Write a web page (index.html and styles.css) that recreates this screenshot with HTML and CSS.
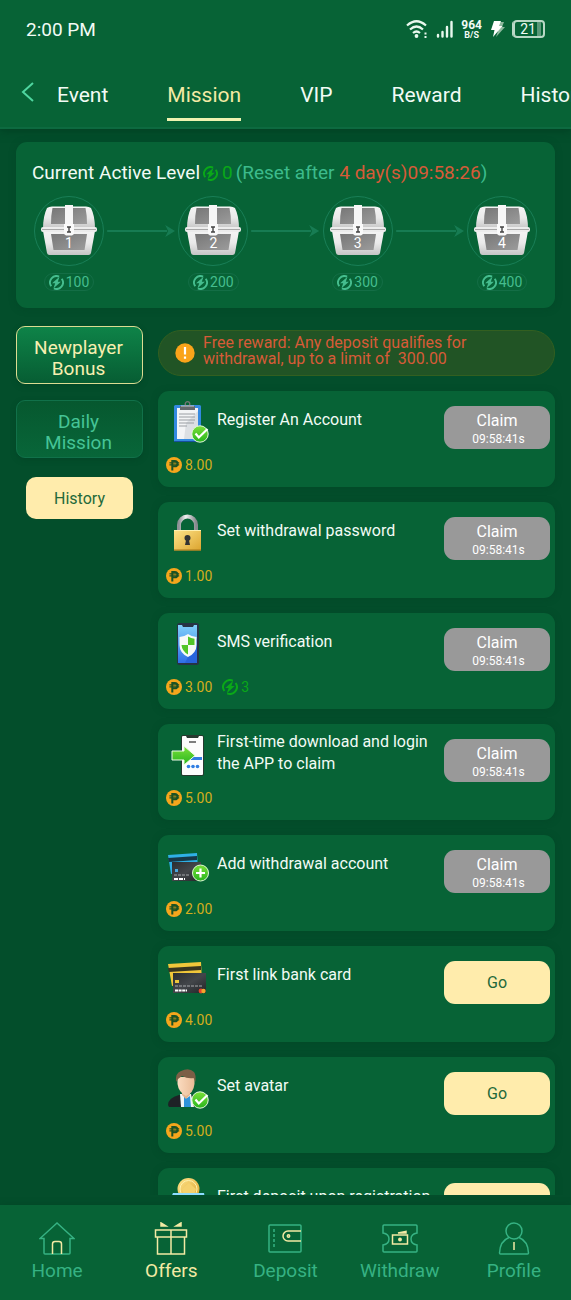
FILE: index.html
```html
<!DOCTYPE html>
<html lang="en">
<head>
<meta charset="utf-8">
<meta name="viewport" content="width=device-width, initial-scale=1">
<title>Mission</title>
<link rel="stylesheet" href="styles.css">
</head>
<body>
<svg class="defs" aria-hidden="true">
  <defs>
    <linearGradient id="metal" x1="0" x2="0" y1="0" y2="1"><stop offset="0" stop-color="#f4f4f4"/><stop offset=".5" stop-color="#eaeaea"/><stop offset="1" stop-color="#c4c4c4"/></linearGradient>
    <linearGradient id="panel" x1="0" x2="1" y1="0" y2="1"><stop offset="0" stop-color="#777"/><stop offset="1" stop-color="#9c9c9c"/></linearGradient>
    <linearGradient id="gold" x1="0" x2="1" y1="0" y2="1"><stop offset="0" stop-color="#ffe48a"/><stop offset="1" stop-color="#dca42e"/></linearGradient>
    <linearGradient id="steel" x1="0" x2="1"><stop offset="0" stop-color="#8e9296"/><stop offset=".4" stop-color="#f1f1f1"/><stop offset="1" stop-color="#85898d"/></linearGradient>
    <linearGradient id="green" x1="0" x2="0" y1="0" y2="1"><stop offset="0" stop-color="#7be03a"/><stop offset="1" stop-color="#27b51c"/></linearGradient>
    <linearGradient id="screen" x1="0" x2="0" y1="0" y2="1"><stop offset="0" stop-color="#7fd0fa"/><stop offset="1" stop-color="#2f6fe8"/></linearGradient>
    <linearGradient id="skin" x1="0" x2="1"><stop offset="0" stop-color="#fbdcc0"/><stop offset="1" stop-color="#eabb96"/></linearGradient>
    <linearGradient id="dark" x1="0" x2="1" y1="0" y2="1"><stop offset="0" stop-color="#2b2d30"/><stop offset=".5" stop-color="#43464a"/><stop offset="1" stop-color="#222427"/></linearGradient>
  </defs>
  <symbol id="bolt" viewBox="0 0 16 16">
    <path d="M10.800 1.700A6.900 6.900 0 0 0 2.400 12M5.200 14.300A6.900 6.900 0 0 0 13.600 4" fill="none" stroke="currentColor" stroke-width="2"/>
    <path d="M11.200 1.800 3.300 8.900h3.300l-1.800 5.300 7.900-7.100H9.400z" fill="currentColor"/>
  </symbol>
  <symbol id="chest" viewBox="0 0 56 52">
    <path d="M6 3Q8 1.500 11 1.500h34q3 0 5 1.500 4 8 4 21H2Q2 11 6 3z" fill="url(#metal)"/>
    <path d="M11.500 3Q10 10 10 19h14V3zM32 3v16h14q0-9-1.500-16z" fill="url(#panel)"/>
    <path d="M2 26h52l-4 22q-.5 2-2.500 2h-39Q6.500 50 6 48z" fill="url(#metal)"/>
    <path d="M10 29h36l-2.500 16h-31z" fill="url(#panel)"/>
    <path d="M24 0h8v21h-8z" fill="#f6f6f6"/>
    <rect y="22" width="56" height="5" rx="2" fill="#ececec"/><path d="M1 24.500h54" stroke="#a8a8a8"/>
    <path d="M23 19h10v10l-2 1.500h-6L23 29z" fill="#fafafa"/>
    <path d="M26 22h4M28 22v5M26 27h4" stroke="#444" stroke-width="1.400"/>
  </symbol>
  <symbol id="peso" viewBox="0 0 16 16">
    <circle cx="8" cy="8" r="8" fill="#f5a61c"/>
    <path d="M6.300 13.500V4h2.500a2.600 2.600 0 0 1 0 5.300H6.300" fill="none" stroke="#1b5225" stroke-width="2"/>
    <path d="M3.400 5.800h9.800M3.400 7.900h9.800" stroke="#1b5225" stroke-width="1.200"/>
  </symbol>
  <symbol id="check" viewBox="0 0 18 18">
    <circle cx="9" cy="9" r="8.200" fill="url(#green)" stroke="#e4f8dc" stroke-width="1"/>
    <path d="m4.500 8.500 3.300 4L16.500 4" fill="none" stroke="#fff" stroke-width="2.200"/>
  </symbol>
  <symbol id="clipboard" viewBox="0 0 42 42">
    <rect x="6" y="4" width="27" height="37" rx="1.500" fill="#3389e0"/><path d="M6 40h27v1H6z" fill="#174f9c"/>
    <path d="M9 7h21v31H9z" fill="#f3f4f6"/><path d="m18 22 12-12v28H16z" fill="#dcdfe3"/>
    <path d="M11 13h16M11 16h16M11 19h16M11 22h15M11 25h8" stroke="#9a9ea3"/>
    <circle cx="19.500" cy="3" r="2.300" fill="none" stroke="#777" stroke-width="1.300"/>
    <path d="M12 5h15v4H12z" fill="#65696d"/><path d="M13 5h13" stroke="#c6c9cc"/>
    <use href="#check" x="23" y="24" width="18" height="18"/>
  </symbol>
  <symbol id="padlock" viewBox="0 0 42 42">
    <path d="M11 20v-7a8.500 8.500 0 0 1 17 0v7" fill="none" stroke="url(#steel)" stroke-width="4"/>
    <path d="M6 18h27v20.500H6z" fill="url(#gold)"/><path d="M6 18.500h27" stroke="#fff0ae"/><path d="M6 38h27" stroke="#a87618"/>
    <circle cx="19.500" cy="26" r="3" fill="#333"/><path d="m18.500 26-1.500 7h5l-1.500-7z" fill="#333"/>
  </symbol>
  <symbol id="phone-shield" viewBox="0 0 42 42">
    <rect x="9" width="22" height="42" rx="2.500" fill="#263445"/>
    <path d="M10 2h4l1 2h10l1-2h3v38H10z" fill="url(#screen)"/><path d="M29 15v25H17z" fill="#2864dc"/>
    <path d="M20 11q4 3 8.500 3v8q0 8-8.500 12-8.500-4-8.500-12v-8q4.500 0 8.500-3z" fill="#f7faf7"/>
    <path d="M20 13.500q3 2 6.500 2.300V22H20zM13.500 22H20v9.500Q14 28 13.500 22z" fill="#52c529"/>
  </symbol>
  <symbol id="phone-login" viewBox="0 0 42 42">
    <rect x="13" y="1" width="23" height="41" rx="2.500" fill="#27382f"/>
    <path d="M14 3q0-1 1-1h3l1 2h11l1-2h3q1 0 1 1v37q0 1-1 1H15q-1 0-1-1z" fill="#fcfcfc"/>
    <path d="M21 8h7" stroke="#555" stroke-width="1.500"/><path d="M23 23h11v3H21z" fill="#2f7de2"/>
    <circle cx="20.500" cy="32.500" r="1.800" fill="#2f7de2"/><circle cx="25" cy="32.500" r="1.800" fill="#2f7de2"/><circle cx="29.500" cy="32.500" r="1.800" fill="#2f7de2"/>
    <path d="M4 17h12v-5l11 9.500L16 31v-5H4z" fill="url(#green)" stroke="#effce8"/>
  </symbol>
  <symbol id="cards-blue" viewBox="0 0 42 42">
    <path d="m0 10 29-2 1 17-27 4z" fill="#2fb0e6"/><path d="m0 13 29-2v4L1 17z" fill="#173747"/>
    <path d="M4 17h29v19H4z" fill="url(#dark)"/><path d="M7 24h3v3H7z" fill="#4aa7dc"/>
    <path d="M6 30h15" stroke="#a4a7aa" stroke-dasharray="3 1"/><path d="M6 34h11" stroke="#fff" stroke-width="1.800" stroke-dasharray="4 1"/>
    <circle cx="32.500" cy="28" r="8" fill="url(#green)" stroke="#dff8d6"/><path d="M28 28h9M32.500 23.500v9" stroke="#fff" stroke-width="2.200"/>
  </symbol>
  <symbol id="cards-gold" viewBox="0 0 42 42">
    <path d="m0 8 33-2 1 20-30 4z" fill="#f0c63a"/><path d="m0 12 33-2v4L1 16z" fill="#38341f"/>
    <path d="M5 17h33v20H5z" fill="url(#dark)"/><path d="M7 24h4v3H7z" fill="#ebc63a"/>
    <path d="M7 30h28" stroke="#a8aaad" stroke-dasharray="3 1"/><path d="M7 34.500h12" stroke="#fff" stroke-width="2" stroke-dasharray="3 .6"/>
    <circle cx="33" cy="35" r="2.400" fill="#e5442e"/><circle cx="35.500" cy="35" r="2.200" fill="#f2a62b"/>
  </symbol>
  <symbol id="avatar" viewBox="0 0 42 42">
    <path d="M0 38q0-7 11-10h12q12 2 12 12H1z" fill="#1e2226"/>
    <path d="M12 27h11l3 13H13z" fill="#f2f6f8"/><path d="m16 29 3 2 3-2 1 11h-7z" fill="#2f94dc"/>
    <path d="M14 22h8v6l-4 4-4-4z" fill="#e4b48d"/>
    <path d="M9.500 10h17v7q-1 9-8.500 12Q10.500 25 9.500 17z" fill="url(#skin)"/>
    <path d="M8 15Q7 6 13 4q8-4 13 1 2 2 1.500 10l-2-4Q20 12 14 9l-4 3z" fill="#7c5f46"/>
    <use href="#check" x="23" y="24" width="18" height="18"/>
  </symbol>
  <symbol id="deposit-coin" viewBox="0 0 42 42">
    <circle cx="20.500" cy="11" r="11" fill="url(#gold)"/><circle cx="20.500" cy="11" r="8.500" fill="none" stroke="#fff0ad"/>
    <path d="m14 11 7-6 7 6-2 6H16z" fill="#f5d16d"/><path d="M5 15h31l2 8v17H3V23z" fill="#4cbcf2"/><path d="M5 15h31v3H4z" fill="#8ddcff"/>
  </symbol>
</svg>
<div class="app">
  <header class="top">
    <div class="status">
      <span class="clock">2:00 PM</span>
      <div class="status-icons">
        <svg width="22" height="20" viewBox="0 0 22 20" fill="none" stroke="#e9f8ee" stroke-width="2.200"><path d="M1 6.500q9.500-8.500 19 0M4 10.500q6.500-6 13 0M7 14q3.500-3 7 0"/><circle cx="10.500" cy="17" r="1.900" fill="#e9f8ee" stroke="none"/><path d="M19.500 13.500v2M19.500 17v2" stroke-width="2"/></svg>
        <svg width="17" height="18" viewBox="0 0 17 18" stroke="#e9f8ee" stroke-width="2.400" stroke-linecap="round"><path d="M2 15v1.500M6.500 12v4.500M11 7v9.500M15.500 2v14.500"/></svg>
        <span class="speed"><b>964</b><small>B/S</small></span>
        <svg width="15" height="18" viewBox="0 0 15 18"><path d="M7 2h7l-2 5h3L6 17l2-6H5z" fill="#8db99e"/><path d="M4 1h7L9 6h3.500L3 17l1.500-7H1z" fill="#fff"/></svg>
        <span class="battery">21</span>
      </div>
    </div>
    <nav class="tabs" aria-label="Sections">
      <button class="back" aria-label="Back"><svg width="13" height="20" viewBox="0 0 13 20"><path d="M12 1 2 10l10 9" fill="none" stroke="#4fd6a0" stroke-width="2"/></svg></button>
      <a href="#">Event</a><a href="#" class="active" aria-current="page">Mission</a><a href="#">VIP</a><a href="#">Reward</a><a href="#">History</a>
    </nav>
  </header>

  <main class="content">
    <section class="level card">
      <h1>Current Active Level <span class="points"><svg><use href="#bolt"/></svg>0</span> <span class="reset">(Reset after <em>4 day(s)09:58:26</em>)</span></h1>
      <div class="chests">
        <div class="step"><button class="chest"><svg><use href="#chest"/></svg><span>1</span></button><span class="pill"><svg><use href="#bolt"/></svg>100</span></div>
        <svg class="arrow" viewBox="0 0 68 12"><path d="M0 6h60"/><path class="tip" d="M58 0l10 6-10 6 3-6z"/></svg>
        <div class="step"><button class="chest"><svg><use href="#chest"/></svg><span>2</span></button><span class="pill"><svg><use href="#bolt"/></svg>200</span></div>
        <svg class="arrow" viewBox="0 0 68 12"><path d="M0 6h60"/><path class="tip" d="M58 0l10 6-10 6 3-6z"/></svg>
        <div class="step"><button class="chest"><svg><use href="#chest"/></svg><span>3</span></button><span class="pill"><svg><use href="#bolt"/></svg>300</span></div>
        <svg class="arrow" viewBox="0 0 68 12"><path d="M0 6h60"/><path class="tip" d="M58 0l10 6-10 6 3-6z"/></svg>
        <div class="step"><button class="chest"><svg><use href="#chest"/></svg><span>4</span></button><span class="pill"><svg><use href="#bolt"/></svg>400</span></div>
      </div>
    </section>

    <div class="columns">
      <aside class="side">
        <button class="side-tab selected">Newplayer Bonus</button>
        <button class="side-tab">Daily Mission</button>
        <button class="history">History</button>
      </aside>
      <section class="missions">
        <div class="notice">
          <svg width="20" height="20" viewBox="0 0 20 20"><circle cx="10" cy="10" r="9.700" fill="#faa41a"/><path d="M10 4v7.500M10 13.500v2.200" stroke="#fff" stroke-width="2.200"/></svg>
          <p>Free reward: Any deposit qualifies for withdrawal, up to a limit of&nbsp; 300.00</p>
        </div>
        <article class="card mission">
          <div class="row"><svg class="pic"><use href="#clipboard"/></svg><h2>Register An Account</h2><button class="action claim">Claim<small>09:58:41s</small></button></div>
          <div class="prize"><svg><use href="#peso"/></svg>8.00</div>
        </article>
        <article class="card mission">
          <div class="row"><svg class="pic"><use href="#padlock"/></svg><h2>Set withdrawal password</h2><button class="action claim">Claim<small>09:58:41s</small></button></div>
          <div class="prize"><svg><use href="#peso"/></svg>1.00</div>
        </article>
        <article class="card mission">
          <div class="row"><svg class="pic"><use href="#phone-shield"/></svg><h2>SMS verification</h2><button class="action claim">Claim<small>09:58:41s</small></button></div>
          <div class="prize"><svg><use href="#peso"/></svg>3.00<span class="bonus"><svg><use href="#bolt"/></svg>3</span></div>
        </article>
        <article class="card mission">
          <div class="row"><svg class="pic"><use href="#phone-login"/></svg><h2>First-time download and login the APP to claim</h2><button class="action claim">Claim<small>09:58:41s</small></button></div>
          <div class="prize"><svg><use href="#peso"/></svg>5.00</div>
        </article>
        <article class="card mission">
          <div class="row"><svg class="pic"><use href="#cards-blue"/></svg><h2>Add withdrawal account</h2><button class="action claim">Claim<small>09:58:41s</small></button></div>
          <div class="prize"><svg><use href="#peso"/></svg>2.00</div>
        </article>
        <article class="card mission">
          <div class="row"><svg class="pic"><use href="#cards-gold"/></svg><h2>First link bank card</h2><button class="action go">Go</button></div>
          <div class="prize"><svg><use href="#peso"/></svg>4.00</div>
        </article>
        <article class="card mission">
          <div class="row"><svg class="pic"><use href="#avatar"/></svg><h2>Set avatar</h2><button class="action go">Go</button></div>
          <div class="prize"><svg><use href="#peso"/></svg>5.00</div>
        </article>
        <article class="card mission">
          <div class="row"><svg class="pic"><use href="#deposit-coin"/></svg><h2>First deposit upon registration</h2><button class="action go">Go</button></div>
        </article>
      </section>
    </div>
  </main>

  <nav class="bottom" aria-label="Main">
    <a href="#"><svg viewBox="0 0 36 34"><path d="M18 1 1 16.500h4V31q0 1 1 1h24q1 0 1-1V16.500h4z"/><path class="hi" d="M13.500 32V22q0-2.500 2.500-2.500h4q2.500 0 2.500 2.500v10"/></svg>Home</a>
    <a href="#" class="active"><svg viewBox="0 0 36 34"><path d="M2.500 8h31v7h-31zM4.500 15h27v17h-27zM18 8v24"/><path class="solid" d="m8 1 5 3H8zM28 1l-5 3h5z"/></svg>Offers</a>
    <a href="#"><svg viewBox="0 0 36 34"><rect x="2" y="3" width="32" height="27" rx="1"/><path d="M7 7v18" stroke-dasharray="3 2"/><path class="hi" d="M34 9H21a5 5 0 0 0 0 10h13"/><circle class="hi" cx="21.500" cy="14" r="1.200"/></svg>Deposit</a>
    <a href="#"><svg viewBox="0 0 36 34"><path d="M1 4q0-1 1-1h32q1 0 1 1v7q-6 1-6 6t6 6v6q0 1-1 1H2q-1 0-1-1v-6q6-1 6-6t-6-6z"/><path class="hi" d="M10.500 13h15v9h-15z"/><path class="hi solid" d="m16 11 8-1.500v1.500z"/><circle class="hi solid" cx="18" cy="17.500" r="1.200"/></svg>Withdraw</a>
    <a href="#"><svg viewBox="0 0 36 34"><circle cx="18" cy="9" r="8"/><path d="M13 15.500Q4 19 3.500 31q0 1 1 1h27q1 0 1-1Q32 19 23 15.500"/><path class="hi" d="M18 20v8"/></svg>Profile</a>
  </nav>
</div>
</body>
</html>
```
FILE: styles.css
```css
* { box-sizing: border-box; margin: 0; }
body { background: #034e2b; font-family: Roboto, "Liberation Sans", sans-serif; color: #f2fbf5; }
button { font: inherit; color: inherit; border: 0; padding: 0; background: none; cursor: pointer; }
a { color: inherit; text-decoration: none; }
svg { display: block; flex: none; }
.defs { position: absolute; width: 0; height: 0; }
.app { height: 100vh; display: flex; flex-direction: column; }

.top { flex: none; background: #076336; border-bottom: 2px solid #0d6a40; box-shadow: 0 2px 8px #024023; }
.status { height: 58px; padding: 0 26px; display: flex; align-items: center; justify-content: space-between; font-size: 19px; }
.status-icons { display: flex; align-items: center; gap: 8px; }
.speed { display: flex; flex-direction: column; align-items: center; font-size: 12px; line-height: 11px; }
.speed b { font-weight: 700; }
.speed small { font-size: 9px; line-height: 8px; font-weight: 700; }
.battery { width: 32px; height: 18px; border: 2px solid #b9d8c5; border-radius: 4px; font-size: 14px; line-height: 14px; text-align: center; padding-right: 2px; background: linear-gradient(90deg, transparent 78%, #5b9878 78%); background-clip: content-box; box-shadow: -2px 0 0 -1px #b9d8c5; }
.tabs { height: 69px; padding-left: 21px; display: flex; align-items: flex-start; gap: 59px; overflow: hidden; white-space: nowrap; font-size: 21px; line-height: 28px; padding-top: 23px; }
.back { width: 15px; height: 22px; margin-right: -36px; }
.tabs a { padding-bottom: 9px; border-bottom: 3px solid transparent; }
.tabs .active { color: #f3eaa4; border-color: #eef3b0; }

.content { flex: 1; min-height: 0; overflow: hidden; padding: 13px 16px 0; margin-bottom: 10px; }
.card { background: #076336; border-radius: 11px; box-shadow: 0 1px 6px #02432580; }
.level { height: 166px; padding: 18px 16px 0; }
.level h1 { font-size: 19px; line-height: 26px; font-weight: 400; white-space: nowrap; display: flex; gap: 3px; }
.points { color: #0aa818; display: flex; align-items: center; gap: 4px; }
.points svg { width: 15px; height: 15px; }
.reset { color: #3cbb8c; }
.reset em { color: #d75b38; font-style: normal; }
.chests { display: flex; align-items: flex-start; gap: 3px; padding: 10px 2px 0; }
.step { width: 70px; display: flex; flex-direction: column; align-items: center; gap: 7px; }
.chest { position: relative; width: 70px; height: 70px; border: 1px solid #197f57; border-radius: 50%; display: grid; place-items: center; }
.chest svg { width: 56px; height: 52px; }
.chest span { position: absolute; left: 0; right: 0; top: 36px; font-size: 14px; line-height: 20px; color: #fff; }
.arrow { flex: 1; min-width: 0; height: 12px; margin-top: 29px; fill: none; stroke: #177c53; stroke-width: 2; }
.arrow .tip { fill: #177c53; stroke: none; }
.pill { height: 18px; padding: 0 4px; border: 1px solid #146e46; border-radius: 9px; display: flex; align-items: center; gap: 2px; color: #45bd8e; font-size: 14px; }
.pill svg { width: 15px; height: 15px; }

.columns { display: flex; align-items: flex-start; gap: 15px; padding-top: 18px; }
.side { flex: none; width: 127px; display: flex; flex-direction: column; gap: 16px; }
.side-tab { height: 58px; padding: 5px 12px 0 10px; border: 1px solid #11714a; border-radius: 9px; background: linear-gradient(#06582f, #086639); color: #45c496; font-size: 19px; line-height: 21px; box-shadow: 0 2px 5px #02402380; }
.selected { background: linear-gradient(#0e8348, #075d33); border-color: #dcdc92; color: #f8efb0; }
.history { height: 42px; margin: 3px 10px 0; border-radius: 10px; background: #ffecac; color: #23693a; font-size: 16px; }

.missions { flex: 1; min-width: 0; display: flex; flex-direction: column; gap: 15px; padding-top: 4px; }
.notice { min-height: 46px; padding: 2px 60px 6px 16px; border: 1px solid #335f20; border-radius: 23px; background: #215425; color: #d75b38; display: flex; align-items: center; gap: 8px; font-size: 16px; line-height: 16px; }
.notice svg { margin-top: 4px; }
.mission { height: 96px; }
.row { min-height: 58px; display: flex; align-items: center; padding: 0 5px 0 10px; }
.pic { width: 42px; height: 42px; margin: 3px 7px 0 0; }
.row h2 { flex: 1; min-width: 0; font-size: 16px; line-height: 22px; font-weight: 400; }
.action { flex: none; width: 106px; height: 43px; margin-top: 15px; border-radius: 11px; font-size: 16px; line-height: 19px; }
.claim { background: #999; color: #fff; padding-top: 3px; }
.claim small { display: block; margin-top: 1px; font-size: 12px; line-height: 17px; padding-left: 3px; }
.go { background: #ffecac; color: #23693a; }
.prize { display: flex; align-items: center; gap: 3px; padding: 8px 0 0 8px; font-size: 14px; line-height: 16px; color: #d4ae1d; }
.prize svg { width: 16px; height: 16px; }
.bonus { display: flex; gap: 3px; margin-left: 7px; color: #0aa818; }

.bottom { flex: none; height: 95px; background: #076336; display: grid; grid-template-columns: repeat(5, 1fr); color: #36b283; font-size: 19px; line-height: 24px; box-shadow: 0 -1px 5px #02432580; }
.bottom a { display: flex; flex-direction: column; align-items: center; gap: 3px; padding-top: 17px; }
.bottom svg { width: 36px; height: 34px; fill: none; stroke: #36b283; stroke-width: 1.5; }
.bottom .active { color: #f3eaa4; }
.bottom .active svg, .bottom .hi { stroke: #f3eaa4; }
.bottom .solid { fill: #f3eaa4; }
```
